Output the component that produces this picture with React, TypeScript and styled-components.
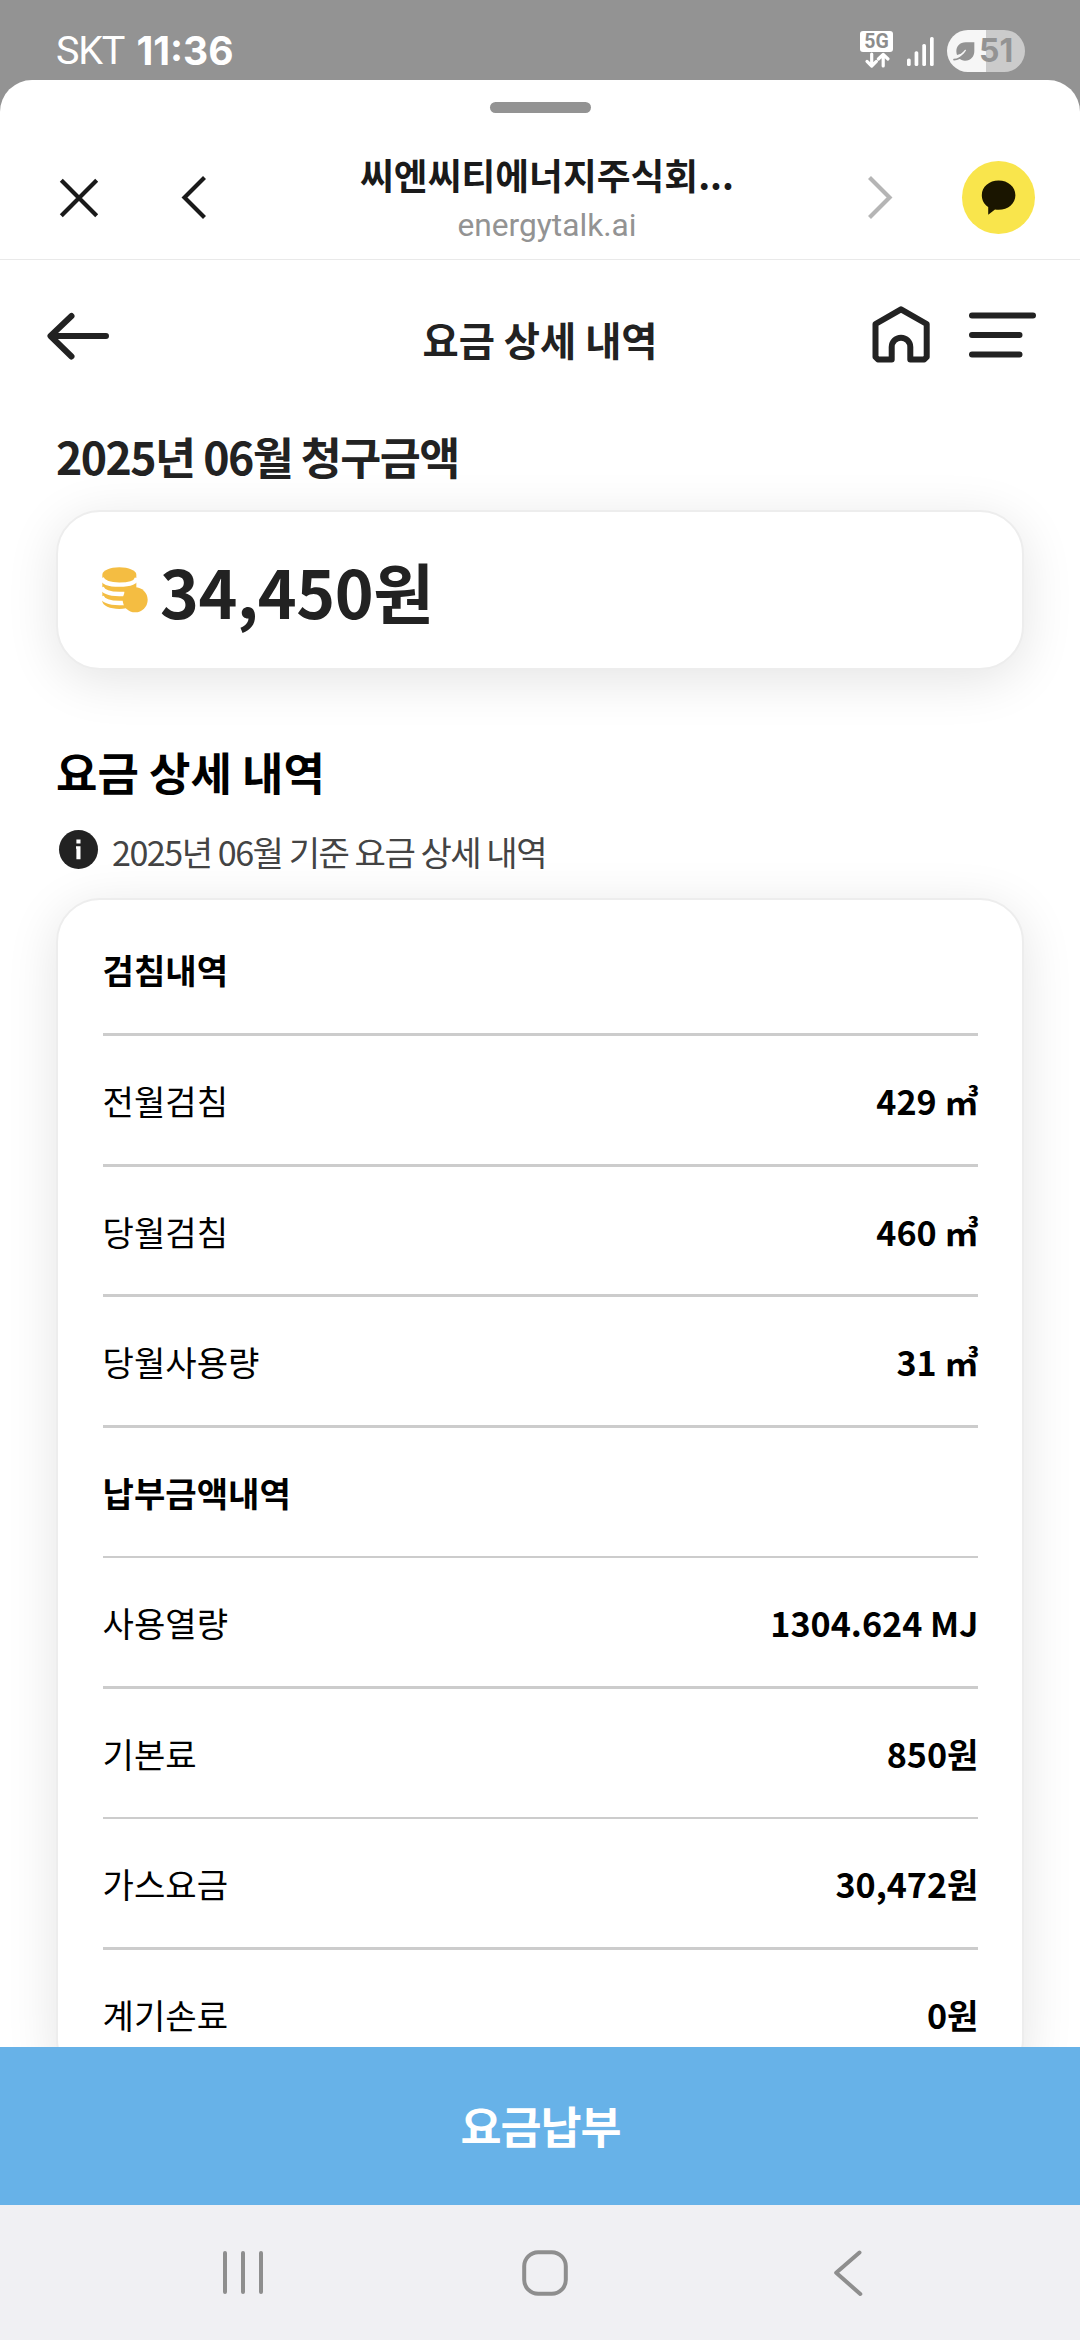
import React from "react";
import styled, { createGlobalStyle } from "styled-components";

const GlobalStyle = createGlobalStyle`
  *, *::before, *::after { box-sizing: border-box; }
  html, body { margin: 0; padding: 0; }
  body { background: #939393; overflow: hidden; }
  h1, h2, p, ul { margin: 0; padding: 0; }
  button { border: 0; padding: 0; background: none; color: inherit; font: inherit; }
  svg { display: block; flex: none; overflow: visible; }
`;

const Screen = styled.div`
  display: flex;
  flex-direction: column;
  width: 1080px;
  height: 2340px;
  overflow: hidden;
  background: #939393;
  font-family: "Noto Sans CJK KR", "Noto Sans", sans-serif;
`;

/* ---------- status bar ---------- */

const StatusBar = styled.header`
  flex: none;
  display: flex;
  align-items: center;
  justify-content: space-between;
  height: 80px;
  padding: 22px 55px 0 56px;
  color: #fff;
`;

const StatusGroup = styled.div<{ $gap: number }>`
  display: flex;
  align-items: center;
  gap: ${(p) => p.$gap}px;
`;

const Carrier = styled.span`
  font: 400 39.5px/48px Roboto, sans-serif;
  letter-spacing: -1.3px;
`;

const Clock = styled.span`
  font: 700 39px/48px Inter, sans-serif;
`;

const Network = styled.div`
  display: flex;
  flex-direction: column;
  align-items: center;
  padding-bottom: 3px;
`;

const NetworkLabel = styled.span`
  width: 33px;
  height: 21px;
  border-radius: 3px;
  background: #fff;
  color: #8c8c8c;
  font: 700 19.5px/21px Roboto, sans-serif;
  text-align: center;
`;

const Battery = styled.div`
  display: flex;
  align-items: center;
  gap: 4px;
  width: 78px;
  height: 42px;
  padding-left: 6px;
  border-radius: 21px;
  background: linear-gradient(90deg, #f6f6f6 50%, #cbcbcb 50%);
  color: #939393;
  font: 700 32px/42px Inter, sans-serif;
`;

/* ---------- browser sheet ---------- */

const Sheet = styled.main`
  flex: 1;
  min-height: 0;
  display: flex;
  flex-direction: column;
  border-radius: 32px 32px 0 0;
  background: #fff;
  overflow: hidden;
`;

const Handle = styled.div`
  flex: none;
  width: 101px;
  height: 11px;
  margin: 22px auto 0;
  border-radius: 6px;
  background: #939393;
`;

const BrowserBar = styled.div`
  flex: none;
  display: flex;
  align-items: center;
  height: 147px;
  padding: 23px 45px 0 60px;
  border-bottom: 1px solid #e9e9e9;
  color: #1a1a1a;
`;

const BarButton = styled.button<{ $before?: number; $after?: number }>`
  flex: none;
  margin-left: ${(p) => p.$before ?? 0}px;
  margin-right: ${(p) => p.$after ?? 0}px;
`;

const PageIdentity = styled.div`
  flex: 1;
  display: flex;
  flex-direction: column;
  gap: 8px;
  padding-left: 20px;
  text-align: center;
  white-space: nowrap;
`;

const PageName = styled.p`
  font-size: 36.75px;
  font-weight: 700;
  line-height: 48px;
`;

const PageHost = styled.p`
  color: #939393;
  font: 400 31.7px/40px Roboto, sans-serif;
`;

const Page = styled.div`
  flex: 1;
  min-height: 0;
  display: flex;
  flex-direction: column;
  overflow: hidden;
  color: #222;
`;

const AppBar = styled.div`
  flex: none;
  display: grid;
  grid-template-columns: 1fr auto 1fr;
  align-items: center;
  height: 152px;
  padding: 0 46px 0 46px;
`;

const AppTitle = styled.h1`
  padding-top: 6px;
  font-size: 39.375px;
  font-weight: 700;
  line-height: 56px;
`;

const AppActions = styled.div`
  display: flex;
  align-items: center;
  justify-content: flex-end;
  gap: 38px;
  margin-right: -2px;
  padding-bottom: 4px;
`;

const Content = styled.div`
  flex: none;
  display: flex;
  flex-direction: column;
  padding: 14px 56px 0;
`;

const BillTitle = styled.h2`
  font-size: 44.625px;
  font-weight: 700;
  line-height: 60px;
  letter-spacing: -1.54px;
`;

const Card = styled.section`
  border: 2px solid #ededed;
  border-radius: 44px;
  background: #fff;
  box-shadow: 0 10px 52px rgba(0, 0, 0, 0.11);
`;

const AmountCard = styled(Card)`
  display: flex;
  align-items: center;
  gap: 12px;
  height: 160px;
  margin-top: 24px;
  padding-left: 44px;
`;

const Amount = styled.strong`
  font-size: 66px;
  font-weight: 700;
  line-height: 96px;
  letter-spacing: -0.5px;
`;

const SectionTitle = styled.h2`
  margin-top: 72px;
  color: #000;
  font-size: 45px;
  font-weight: 700;
  line-height: 60px;
`;

const Notice = styled.p`
  display: flex;
  align-items: center;
  gap: 14px;
  height: 50px;
  margin: 24px 0 22px;
  padding-left: 3px;
  color: #444;
  font-size: 34.125px;
  line-height: 50px;
  letter-spacing: -1.5px;

  svg { margin-bottom: 3px; }
`;

const DetailCard = styled(Card)`
  padding: 5.39px 44.5px 0 44.5px;
`;

const RowList = styled.ul`
  list-style: none;
  color: #000;
  font-size: 34.125px;
`;

const Row = styled.li`
  display: flex;
  flex-direction: column;
  height: 130.59px;
`;

const RowBody = styled.div<{ $heading?: boolean }>`
  flex: 1;
  display: flex;
  align-items: center;
  justify-content: space-between;
  line-height: 50px;
  font-weight: ${(p) => (p.$heading ? 700 : 400)};
`;

const RowValue = styled.span`
  margin-right: -1px;
  font-weight: 700;
`;

const Divider = styled.div`
  flex: none;
  height: 2.625px;
  background: #ccc;
`;

const PayButton = styled.button`
  flex: none;
  height: 158px;
  padding: 0 0 3px 1px;
  background: #67b2e8;
  color: #fff;
  font-size: 44.625px;
  font-weight: 700;
  line-height: 60px;
  letter-spacing: -1px;
`;

/* ---------- system navigation ---------- */

const SystemNav = styled.nav`
  flex: none;
  display: flex;
  align-items: center;
  gap: 259px;
  height: 135px;
  padding-left: 223px;
  background: #f0f0f3;

  svg:last-child { margin-left: 7px; }
`;

/* ---------- icons ---------- */

const DataArrows = () => (
  <svg width="27" height="16" viewBox="0 0 27 16" fill="none" stroke="#fff" strokeWidth="3.2" strokeLinecap="round" strokeLinejoin="round">
    <path d="M8.7 2v11.5M4 9.4l4.7 4.6 4.7-4.6" />
    <path d="M20.2 14V3M15.4 7l4.8-4.6L25 7" />
  </svg>
);

const Signal = () => (
  <svg width="27" height="29" viewBox="0 0 27 29" fill="#fff">
    <rect x="0" y="21.5" width="3.7" height="7.5" rx="1.6" />
    <rect x="7.6" y="14.2" width="3.7" height="14.8" rx="1.6" />
    <rect x="15.3" y="7" width="3.7" height="22" rx="1.6" />
    <rect x="23" y="0" width="3.7" height="29" rx="1.6" />
  </svg>
);

const Leaf = () => (
  <svg width="22" height="19" viewBox="0 0 66 57">
    <path d="M64 1H38C20 1 10 13 10 28c0 4 1 8 2 11l12-4 14-12-10 16-10 10c5 5 11 7 18 7 18 0 28-13 28-29z" fill="#939393" />
    <path d="M3 53c11-1 20-5 27-14" fill="none" stroke="#939393" strokeWidth="5" strokeLinecap="round" />
    <path d="M12 44c9-2 18-8 25-19" fill="none" stroke="#f6f6f6" strokeWidth="3.5" strokeLinecap="round" />
  </svg>
);

const CloseIcon = () => (
  <svg width="38" height="38" viewBox="0 0 38 38" stroke="#1a1a1a" strokeWidth="4.2">
    <path d="M1.3 1.3l35.4 35.4M36.7 1.3L1.3 36.7" />
  </svg>
);

const Chevron = ({ color, flip }: { color: string; flip?: boolean }) => (
  <svg width="24" height="43" viewBox="0 0 24 43" fill="none" stroke={color} strokeWidth="4.2">
    <path d={flip ? "M1.5 1.5l20 20-20 20" : "M22.5 1.5l-20 20 20 20"} />
  </svg>
);

const TalkIcon = () => (
  <svg width="73" height="73" viewBox="0 0 73 73">
    <circle cx="36.5" cy="36.5" r="36.5" fill="#f9e54c" />
    <path d="M36.6 19.6c9.4 0 16.8 6.3 16.8 14.6s-7.4 14.6-16.8 14.6c-1.3 0-2.5-.1-3.6-.3l-6.8 5.2v-7.8c-4-2.6-6.4-6.8-6.400-11.700 0-8.300 7.400-14.600 16.800-14.600z" fill="#1a1500" />
  </svg>
);

const BackArrow = () => (
  <svg width="64" height="48" viewBox="0 0 64 48" fill="none" stroke="#222" strokeWidth="6" strokeLinecap="round" strokeLinejoin="round">
    <path d="M25.5 4L4.5 24l21 20.500M5.500 24H60" />
  </svg>
);

const HomeIcon = () => (
  <svg width="60" height="58" viewBox="0 0 60 58" fill="none" stroke="#222" strokeWidth="6" strokeLinejoin="round">
    <path d="M20.700 54.500H7L4.500 52V19L30 4.400 55.700 19v33l-2.500 2.500H39.300V42a9.300 9.300 0 0 0-18.600 0z" />
  </svg>
);

const MenuIcon = () => (
  <svg width="67" height="46" viewBox="0 0 67 46" stroke="#222" strokeWidth="6" strokeLinecap="round">
    <path d="M3 4.500h61M3 24h47.500M3 43.500h47.500" />
  </svg>
);

const CoinsIcon = () => (
  <svg width="46" height="46" viewBox="0 0 138 138">
    <path d="M1 23C1 11 24 1 52 1s51 10 51 22v80c0 13-23 23-51 23S1 116 1 103z" fill="#f4bd42" />
    <path d="M-1 33c4 13 24 20 53 20s50-7 53-20M-1 61c4 12 24 20 53 20h15M-1 88c4 12 24 20 53 20h15" fill="none" stroke="#fff" strokeWidth="13" />
    <circle cx="99.500" cy="98.500" r="37.500" fill="#f4bd42" />
  </svg>
);

const InfoIcon = () => (
  <svg width="39" height="39" viewBox="0 0 39 39">
    <circle cx="19.500" cy="19.500" r="19.500" fill="#222" />
    <path d="M17.400 9.500h4.100v4h-4.100zM17 16.300h4.500V29.300h-4.100V18.800H17z" fill="#fff" />
  </svg>
);

const RecentsIcon = () => (
  <svg width="40" height="43" viewBox="0 0 40 43" stroke="#8e8e8e" strokeWidth="4" strokeLinecap="round">
    <path d="M2 2v39M20 2v39M38 2v39" />
  </svg>
);

const HomeKeyIcon = () => (
  <svg width="46" height="46" viewBox="0 0 46 46" fill="none" stroke="#8e8e8e" strokeWidth="4">
    <rect x="2.200" y="2.200" width="41.600" height="41.600" rx="14" />
  </svg>
);

const BackKeyIcon = () => (
  <svg width="28" height="46" viewBox="0 0 28 46" fill="none" stroke="#8e8e8e" strokeWidth="4" strokeLinecap="round" strokeLinejoin="round">
    <path d="M25.500 2.500L2.200 22.800 26.300 44" />
  </svg>
);

/* ---------- data ---------- */

interface BillRow {
  label: string;
  value?: string;
}

const rows: BillRow[] = [
  { label: "검침내역" },
  { label: "전월검침", value: "429 ㎥" },
  { label: "당월검침", value: "460 ㎥" },
  { label: "당월사용량", value: "31 ㎥" },
  { label: "납부금액내역" },
  { label: "사용열량", value: "1304.624 MJ" },
  { label: "기본료", value: "850원" },
  { label: "가스요금", value: "30,472원" },
  { label: "계기손료", value: "0원" },
];

export default function App() {
  return (
    <Screen>
      <GlobalStyle />
      <StatusBar>
        <StatusGroup $gap={12.5}>
          <Carrier>SKT</Carrier>
          <Clock>11:36</Clock>
        </StatusGroup>
        <StatusGroup $gap={13.5}>
          <Network>
            <NetworkLabel>5G</NetworkLabel>
            <DataArrows />
          </Network>
          <Signal />
          <Battery>
            <Leaf />
            51
          </Battery>
        </StatusGroup>
      </StatusBar>

      <Sheet>
        <Handle />
        <BrowserBar>
          <BarButton $after={84}><CloseIcon /></BarButton>
          <BarButton><Chevron color="#1a1a1a" /></BarButton>
          <PageIdentity>
            <PageName>씨엔씨티에너지주식회...</PageName>
            <PageHost>energytalk.ai</PageHost>
          </PageIdentity>
          <BarButton><Chevron color="#b5b5b5" flip /></BarButton>
          <BarButton $before={70}><TalkIcon /></BarButton>
        </BrowserBar>

        <Page>
          <AppBar>
            <BarButton as="div"><BackArrow /></BarButton>
            <AppTitle>요금 상세 내역</AppTitle>
            <AppActions>
              <HomeIcon />
              <MenuIcon />
            </AppActions>
          </AppBar>
          <Content>
            <BillTitle>2025년 06월 청구금액</BillTitle>
            <AmountCard>
              <CoinsIcon />
              <Amount>34,450원</Amount>
            </AmountCard>
            <SectionTitle>요금 상세 내역</SectionTitle>
            <Notice>
              <InfoIcon />
              2025년 06월 기준 요금 상세 내역
            </Notice>
            <DetailCard>
              <RowList>
                {rows.map((row) => (
                  <Row key={row.label}>
                    <RowBody $heading={!row.value}>
                      <span>{row.label}</span>
                      {row.value && <RowValue>{row.value}</RowValue>}
                    </RowBody>
                    <Divider />
                  </Row>
                ))}
              </RowList>
            </DetailCard>
          </Content>
        </Page>

        <PayButton>요금납부</PayButton>
      </Sheet>

      <SystemNav>
        <RecentsIcon />
        <HomeKeyIcon />
        <BackKeyIcon />
      </SystemNav>
    </Screen>
  );
}
